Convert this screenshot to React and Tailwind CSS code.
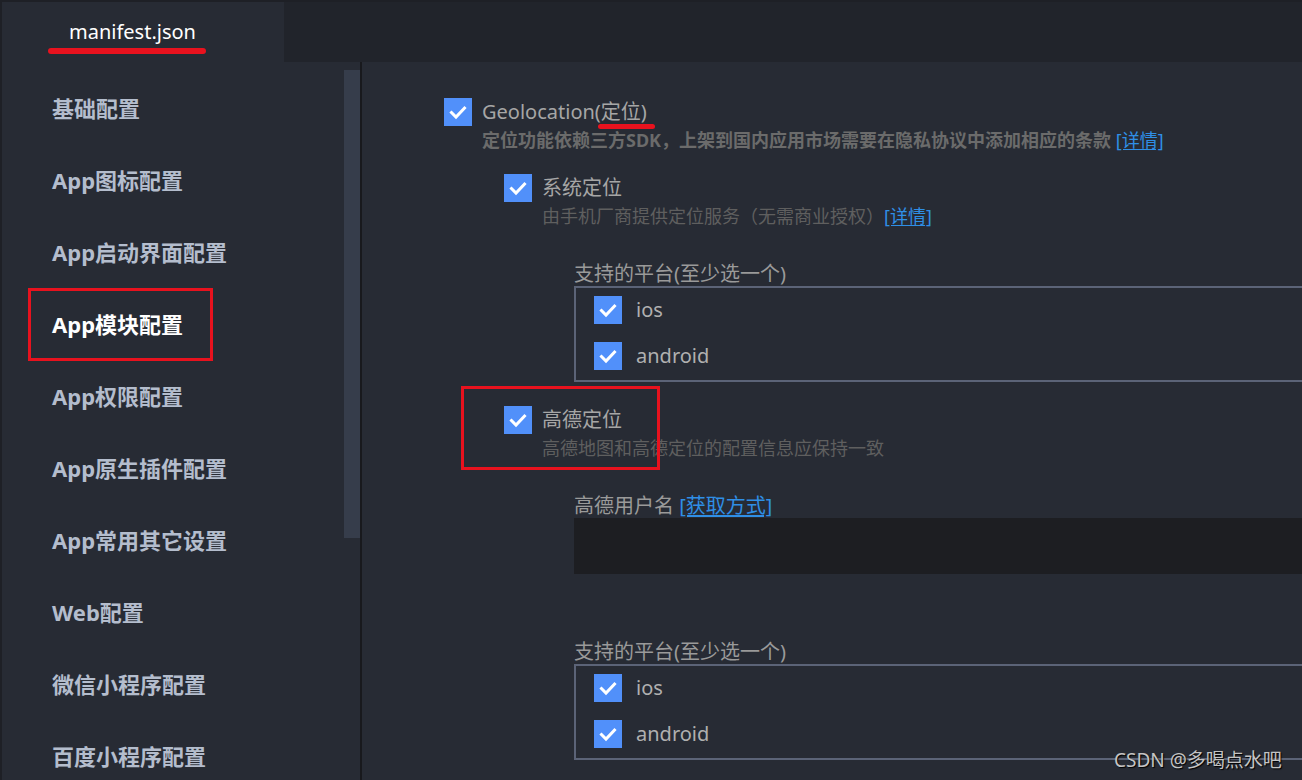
import React from 'react';

const FONT = { fontFamily: '"Noto Sans", "Noto Sans CJK SC", sans-serif' };

const menu = [
  '基础配置',
  'App图标配置',
  'App启动界面配置',
  'App模块配置',
  'App权限配置',
  'App原生插件配置',
  'App常用其它设置',
  'Web配置',
  '微信小程序配置',
  '百度小程序配置',
];

function Check() {
  return (
    <span className="flex h-[28px] w-[28px] shrink-0 items-center justify-center bg-[#5190fa]">
      <svg width="28" height="28" viewBox="0 0 28 28" fill="none">
        <path d="M7.5 14.5l4.5 4.5 8.5-9" stroke="#fff" strokeWidth="3" strokeLinecap="square" />
      </svg>
    </span>
  );
}

function Link({ children }) {
  return <span className="font-normal text-[#2f8fe6] underline underline-offset-2">{children}</span>;
}

function Platforms() {
  return (
    <div className="w-[760px] border-2 border-[#5b6377] pb-[10px] pl-[18px] pt-[8px]">
      <div className="flex flex-col gap-[18px]">
        {['ios', 'android'].map((p) => (
          <div key={p} className="flex h-[28px] items-center gap-[14px]">
            <Check />
            <span className="text-[20px] leading-[28px] text-[#b0b0b0]">{p}</span>
          </div>
        ))}
      </div>
    </div>
  );
}

export default function App() {
  return (
    <div className="relative flex h-[780px] w-[1302px] flex-col overflow-hidden bg-[#1e2026] pl-[2px] pt-[2px]" style={FONT}>
      {/* tab bar */}
      <div className="flex h-[60px] shrink-0">
        <div className="relative flex w-[282px] items-center bg-[#272b34] pl-[67px]">
          <span className="text-[20px] leading-[28px] text-white">manifest.json</span>
          <span className="absolute left-[46px] top-[46px] h-[6px] w-[158px] rounded-full bg-[#e8121e]" />
        </div>
        <div className="flex-1 bg-[#21242b]" />
      </div>

      <div className="flex min-h-0 flex-1 bg-[#272b34]">
        {/* sidebar */}
        <div className="w-[342px] shrink-0 pt-[10px]">
          {menu.map((m) => (
            <div key={m} className="relative flex h-[72px] items-center pl-[50px]">
              <span className={`text-[22px] font-bold ${m === 'App模块配置' ? 'text-white' : 'text-[#b4bdcd]'}`}>{m}</span>
              {m === 'App模块配置' && (
                <span className="absolute left-[26px] top-0 h-[73px] w-[185px] border-[3px] border-[#e8121e]" />
              )}
            </div>
          ))}
        </div>

        {/* scrollbar */}
        <div className="w-[16px] shrink-0 pt-[8px]">
          <div className="h-[468px] bg-[#363d4b]" />
        </div>
        <div className="w-[2px] shrink-0 bg-[#18191d]" />

        {/* content */}
        <div className="relative min-w-0 flex-1 overflow-hidden pl-[82px] pt-[36px]">
          <div className="flex gap-[10px]">
            <Check />
            <div>
              <div className="relative text-[20px] leading-[28px] text-[#a6a6a6]">
                Geolocation(定位)
                <span className="absolute left-[116px] top-[26px] h-[5px] w-[57px] rounded-full bg-[#e8121e]" />
              </div>
              <div className="whitespace-nowrap text-[18px] font-bold leading-[28px] text-[#6b6b6b]">
                定位功能依赖三方SDK，上架到国内应用市场需要在隐私协议中添加相应的条款 <Link>[详情]</Link>
              </div>
            </div>
          </div>

          <div className="ml-[60px] mt-[20px] flex gap-[10px]">
            <Check />
            <div>
              <div className="text-[20px] leading-[28px] text-[#a6a6a6]">系统定位</div>
              <div className="whitespace-nowrap text-[18px] leading-[28px] text-[#5f5f5f]">
                由手机厂商提供定位服务（无需商业授权）<Link>[详情]</Link>
              </div>
            </div>
          </div>

          <div className="ml-[130px] mt-[32px] text-[20px] leading-[24px] text-[#9a9a9a]">支持的平台(至少选一个)</div>
          <div className="ml-[130px]">
            <Platforms />
          </div>

          <div className="relative ml-[60px] mt-[24px] flex gap-[10px]">
            <span className="absolute -left-[43px] -top-[20px] h-[84px] w-[199px] border-[3px] border-[#e8121e]" />
            <Check />
            <div>
              <div className="text-[20px] leading-[28px] text-[#a6a6a6]">高德定位</div>
              <div className="whitespace-nowrap text-[18px] leading-[28px] text-[#5f5f5f]">高德地图和高德定位的配置信息应保持一致</div>
            </div>
          </div>

          <div className="ml-[130px] mt-[32px] text-[20px] leading-[24px] text-[#9a9a9a]">
            高德用户名 <Link>[获取方式]</Link>
          </div>
          <div className="ml-[130px] h-[56px] w-[760px] bg-[#1d1e22]" />

          <div className="ml-[130px] mt-[66px] text-[20px] leading-[24px] text-[#9a9a9a]">支持的平台(至少选一个)</div>
          <div className="ml-[130px]">
            <Platforms />
          </div>
        </div>
      </div>

      <span className="absolute left-[1114px] top-[746px] text-[19px] leading-[28px] text-[#c4c4c4] [text-shadow:1px_1px_1px_#000]">
        CSDN @多喝点水吧
      </span>
    </div>
  );
}
